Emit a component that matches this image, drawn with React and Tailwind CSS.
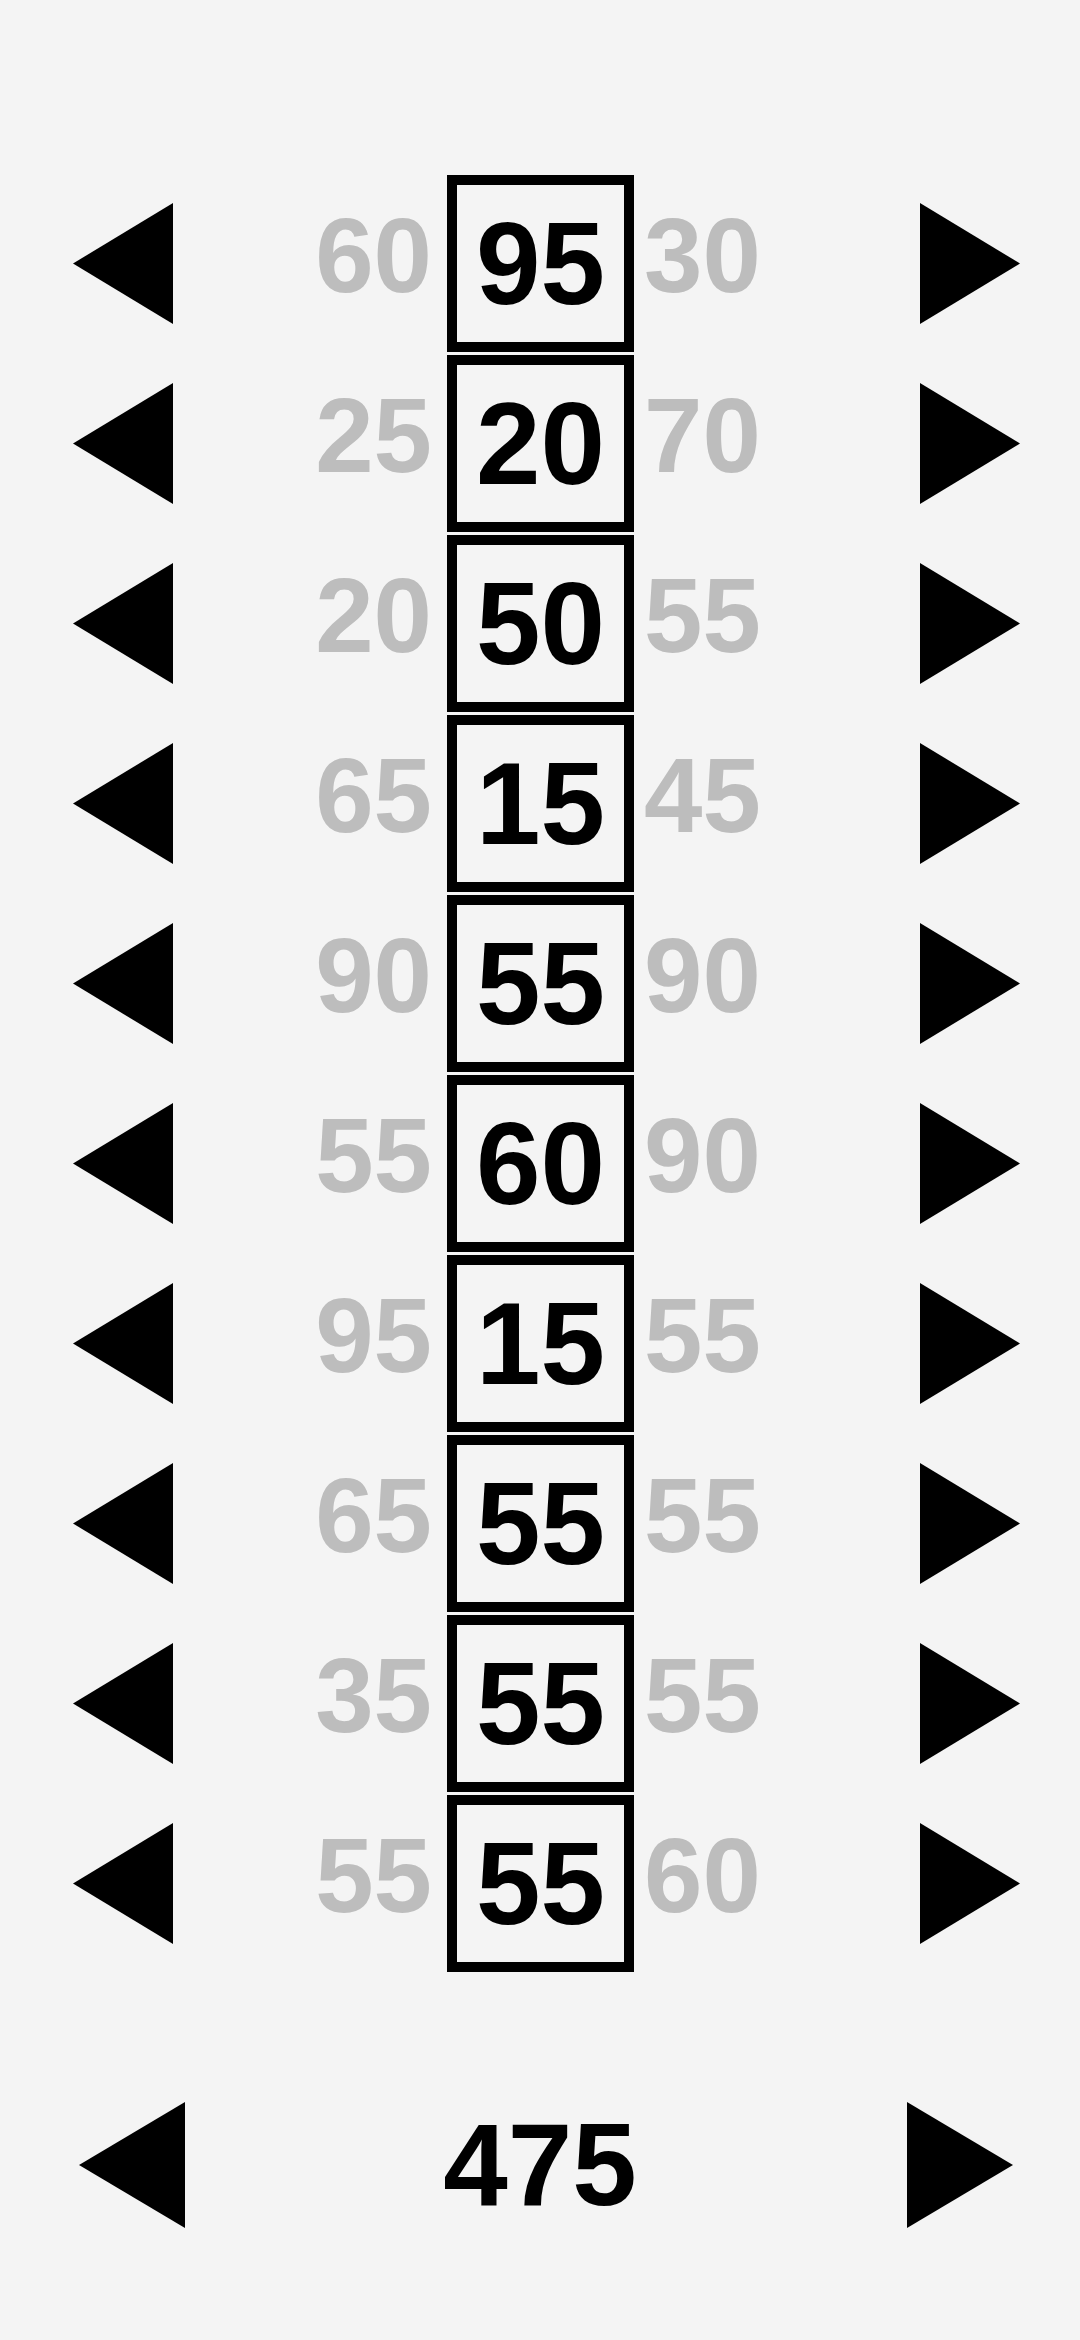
import React, { useState } from 'react';

// each row: option on the left, chosen value, option on the right
const initialRows = [
  [60, 95, 30],
  [25, 20, 70],
  [20, 50, 55],
  [65, 15, 45],
  [90, 55, 90],
  [55, 60, 90],
  [95, 15, 55],
  [65, 55, 55],
  [35, 55, 55],
  [55, 55, 60],
];

function Arrow({ dir, w, h }) {
  const points = dir === 'left' ? `${w},0 ${w},${h} 0,${h / 2}` : `0,0 0,${h} ${w},${h / 2}`;
  return (
    <svg width={w} height={h} viewBox={`0 0 ${w} ${h}`} className="block shrink-0">
      <polygon points={points} fill="#000" />
    </svg>
  );
}

export default function App() {
  const [rows, setRows] = useState(initialRows);

  const shift = (i, dir) => {
    setRows((prev) =>
      prev.map((r, j) => {
        if (j !== i) return r;
        const [l, c, rt] = r;
        return dir === 'left' ? [c, rt, l] : [rt, l, c];
      })
    );
  };

  const total = rows.reduce((sum, r) => sum + r[1], 0);

  return (
    <div className="min-h-screen bg-[#f4f4f4] font-['Liberation_Sans',Arial,sans-serif] font-bold pt-[175px]">
      <div className="flex flex-col gap-[3px]">
        {rows.map(([l, c, r], i) => (
          <div key={i} className="flex items-center h-[177px] pl-[73px]">
            <button onClick={() => shift(i, 'left')} className="w-[100px] flex justify-center">
              <Arrow dir="left" w={100} h={121} />
            </button>
            <div className="w-[259px] text-right text-[105px] leading-none text-[#bdbdbd] pb-[16px]">{l}</div>
            <div className="ml-[15px] w-[187px] h-[177px] border-[10px] border-black flex items-center justify-center text-[116px] leading-none text-black">
              {c}
            </div>
            <div className="ml-[10px] w-[276px] text-left text-[105px] leading-none text-[#bdbdbd] pb-[16px]">{r}</div>
            <button onClick={() => shift(i, 'right')} className="w-[100px] flex justify-center">
              <Arrow dir="right" w={100} h={121} />
            </button>
          </div>
        ))}
      </div>

      <div className="flex items-center h-[126px] mt-[130px] pl-[79px] pr-[67px]">
        <Arrow dir="left" w={106} h={126} />
        <div className="flex-1 text-center text-[116px] leading-none text-black pr-[12px]">{total}</div>
        <Arrow dir="right" w={106} h={126} />
      </div>
    </div>
  );
}
